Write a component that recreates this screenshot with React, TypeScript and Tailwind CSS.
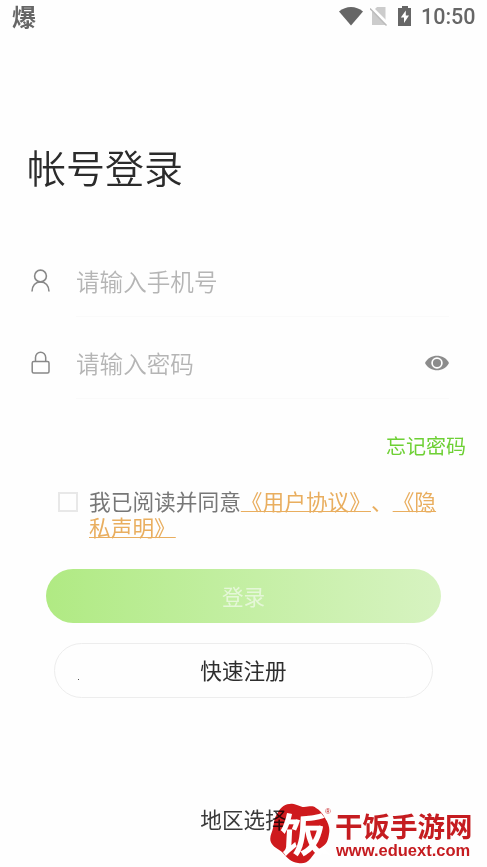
import type { ReactNode } from 'react';

function StatusBar() {
  return (
    <header className="flex h-8 items-center justify-between pl-3 pr-[11px] text-[#666]">
      <span className="h-8 text-2xl leading-8 font-bold">爆</span>
      <div className="flex items-center">
        <svg width="24" height="20" viewBox="0 0 24 20" fill="currentColor">
          <path d="M0 5.5C7-.6 17-.6 24 5.5L12 19.5z" />
        </svg>
        <svg className="ml-[7px]" width="20" height="20" viewBox="0 0 20 20">
          <path d="M7 1H15.500v18H2V6z" fill="#ccc" />
          <path d="M0 .5l19 19" stroke="#fff" strokeWidth="3.5" />
          <path d="M0 2.500l16.500 17" stroke="#bbb" strokeWidth="1.5" />
        </svg>
        <svg className="ml-2" width="14" height="20" viewBox="0 0 14 20">
          <path d="M4 0h6v2h3v18H0V2h4z" fill="currentColor" />
          <path d="M7.800 4.500L2.800 11.500h3.200v5.500l5-7.500H7.800z" fill="#fff" />
        </svg>
        <span className="ml-[9px] w-[55px] pt-[2px] font-['Roboto',sans-serif] text-[21.500px] leading-8 font-medium whitespace-nowrap">10:50</span>
      </div>
    </header>
  );
}

function UserIcon() {
  return (
    <svg width="20" height="24" viewBox="0 0 20 24" fill="none" stroke="#888" strokeWidth="1.6">
      <circle cx="9.500" cy="7" r="5.900" />
      <path d="M1 22.500c0-5.800 3.500-9.600 8.500-9.600s8.500 3.800 8.500 9.600" />
    </svg>
  );
}

function LockIcon() {
  return (
    <svg width="20" height="24" viewBox="0 0 20 24" fill="none" stroke="#888" strokeWidth="1.5">
      <rect x="1.200" y="10.500" width="16.800" height="11.500" rx="1.500" />
      <path d="M4.500 10.500V6.500a5.100 5.300 0 0 1 10.200 0v4" />
    </svg>
  );
}

function EyeIcon() {
  return (
    <svg width="24" height="16" viewBox="0 0 24 16">
      <path d="M0 8C5-1.700 19-1.700 24 8 19 17.700 5 17.700 0 8z" fill="#8c8c8c" />
      <circle cx="12" cy="8" r="4.900" fill="#8c8c8c" stroke="#fff" strokeWidth="1.700" />
    </svg>
  );
}

interface FieldProps {
  icon: ReactNode;
  placeholder: string;
  action?: ReactNode;
}

function Field({ icon, placeholder, action }: FieldProps) {
  return (
    <label className="flex h-[82px] items-center pl-[31px] pr-[38px]">
      {icon}
      <span className="ml-[25px] flex h-[72px] flex-1 items-center border-b border-[#fafafa]">
        <span className="flex-1 text-[23.600px] leading-9 font-[350] text-[#b5b5b5]">{placeholder}</span>
        {action}
      </span>
    </label>
  );
}

function Watermark() {
  return (
    <>
      {/* badge multiplies over the region link so the last character stays visible */}
      <svg
        className="absolute top-[802px] left-[269px] mix-blend-multiply"
        width="66"
        height="65"
        viewBox="0 0 66 65"
      >
        <path
          d="M8 12C12 4 17 1.500 23 1.700 28 2 31 5 35 5c5 0 8-2 12 1 4 2 6 5 9 10 4 6 5 11 4 16-1 6-2 10-7 13-6 4-8 7-11 11-4 5-8 6-13 5-7-1-11-5-15-10-4-4-11-6-12.500-12C.5 34 3 31 4 26c1-5 1-9 4-14z"
          fill="#cf1a1d"
        />
      </svg>
      <div className="absolute top-[802px] left-[269px] flex h-[65px] w-[218px] text-[#c51c20]">
        <div className="relative h-[65px] w-[66px] shrink-0">
          <svg className="absolute inset-0" width="66" height="65" viewBox="0 0 66 65">
            <path d="M44 48l8 3 10 2-8-7z" fill="#fff" />
          </svg>
          <span className="absolute top-[7px] left-[11px] -skew-x-3 text-[46px] leading-[47px] font-bold text-white">饭</span>
          <span className="absolute top-[5px] left-[56px] font-['Liberation_Sans',Arial,sans-serif] text-[8px] leading-[9px]">®</span>
        </div>
        <div className="flex h-[62px] flex-col pt-[7px]">
          <span className="text-[27.5px] leading-[32px] font-bold whitespace-nowrap">干饭手游网</span>
          <span className="ml-px font-['Liberation_Sans',Arial,sans-serif] text-[16.500px] leading-[18px] font-bold whitespace-nowrap">
            www.eduext.com
          </span>
        </div>
      </div>
    </>
  );
}

export default function App() {
  return (
    <main className="relative h-[867px] w-[487px] overflow-hidden bg-[#fefefe] font-['Noto_Sans_CJK_SC',sans-serif] [text-spacing-trim:space-all]">
      <StatusBar />

      <h1 className="mt-[105px] pl-[27px] text-[39px] leading-[58px] font-[350] text-[#2b2b2b]">帐号登录</h1>

      <form className="mt-[45px]">
        <Field icon={<UserIcon />} placeholder="请输入手机号" />
        <Field icon={<LockIcon />} placeholder="请输入密码" action={<EyeIcon />} />

        <div className="mt-[27px] flex justify-end pr-[21px]">
          <a className="text-[20px] leading-[30px] text-[#6ed035]">忘记密码</a>
        </div>

        <div className="mt-[27px] flex pl-[58px]">
          <span className="mt-[4px] size-5 shrink-0 border-2 border-[#e8e8e8]" />
          <p className="ml-[11px] w-[360px] text-[21.700px] leading-[26px] text-[#777]">
            我已阅读并同意
            <a className="text-[#e9ae5f] underline decoration-1 underline-offset-1 [text-decoration-skip-ink:none]">《用户协议》</a>
            <span className="text-[#e9ae5f]">、</span>
            <a className="text-[#e9ae5f] underline decoration-1 underline-offset-1 [text-decoration-skip-ink:none]">《隐私声明》</a>
          </p>
        </div>

        <button
          type="button"
          className="mt-[29px] ml-[46px] block h-[54px] w-[395px] rounded-full bg-linear-to-r from-[#b0ea83] to-[#d7f3c1] text-[21.600px] text-[#e5f7d8]"
        >
          登录
        </button>
        <button
          type="button"
          className="relative mt-5 ml-[54px] block h-[55px] w-[379px] rounded-full border border-[#ededed] text-[21.600px] text-[#2e2e2e]"
        >
          快速注册
          <span className="absolute top-[35px] left-[23px] size-px bg-[#555]" />
        </button>
      </form>

      <div className="mt-[105px] text-center text-[21.600px] leading-8 text-[#3a3a3a]">地区选择</div>

      <Watermark />
    </main>
  );
}
